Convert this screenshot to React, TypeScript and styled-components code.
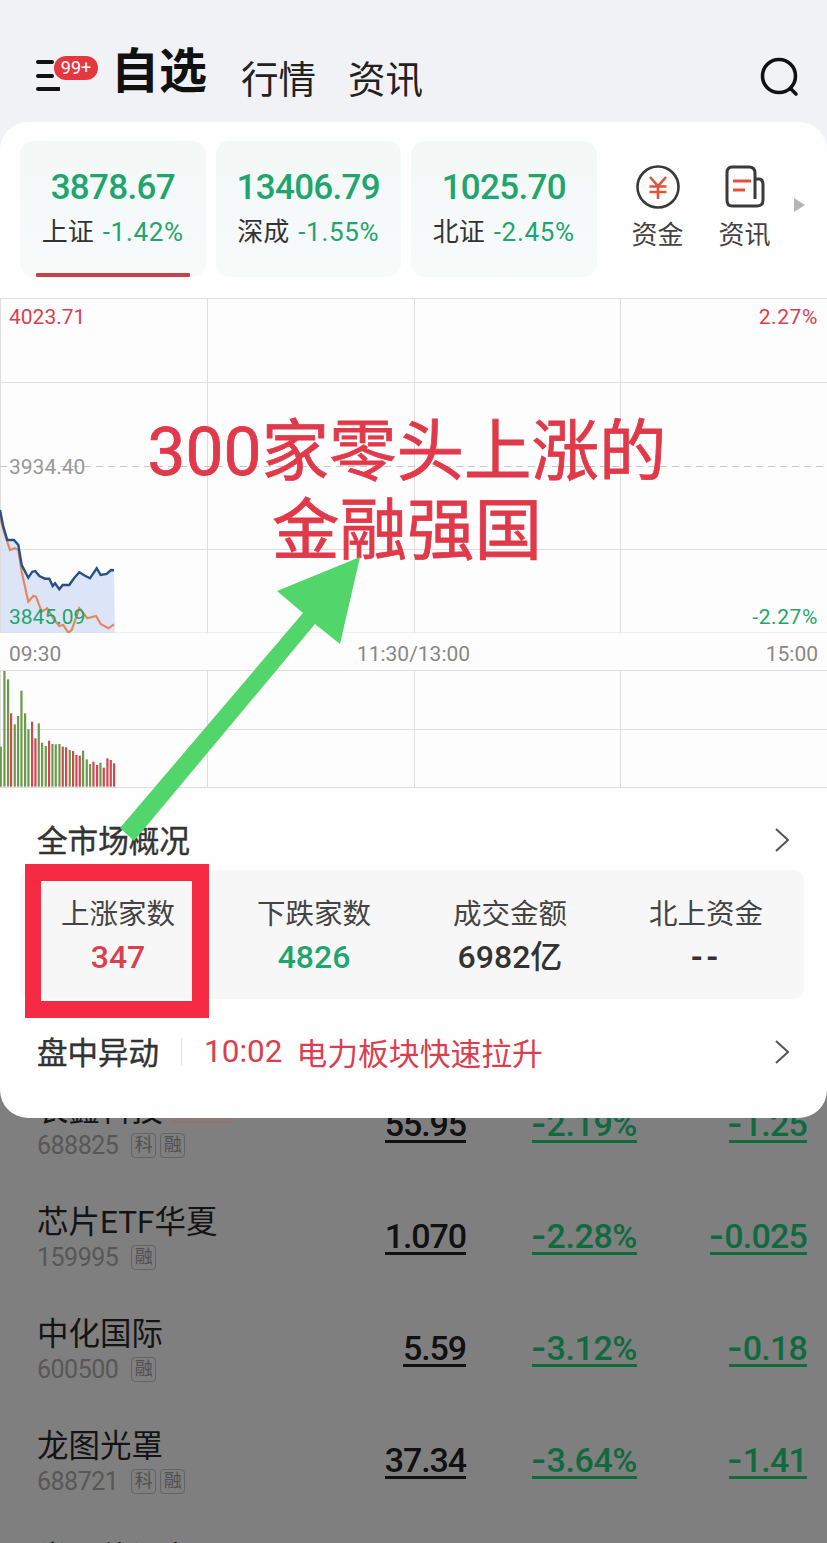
import { FC } from 'react';
import styled, { createGlobalStyle } from 'styled-components';

const GREEN = '#1fa56e';
const RED = '#d9404f';

const GlobalStyle = createGlobalStyle`
	html, body {
		margin: 0;
		padding: 0;
		background: #7f7f7f;
	}

	body {
		font-family: Roboto, "Noto Sans CJK SC", sans-serif;
	}
`;

const Page = styled.div`
	position: relative;
	width: 827px;
	height: 1543px;
	overflow: hidden;
	background: linear-gradient(180deg, #f0f2f6 0 200px, #7f7f7f 200px);
`;

const Header = styled.header`
	box-sizing: border-box;
	height: 122px;
	padding: 43px 27px 0 36px;
	display: flex;
	align-items: flex-start;
	color: #111;
`;

const MenuButton = styled.div`
	position: relative;
	width: 24px;
	height: 34px;
	margin: 17px 51px 0 0;
`;

const MenuBadge = styled.span`
	position: absolute;
	left: 18px;
	top: -4px;
	width: 44px;
	height: 24px;
	border-radius: 12px;
	background: #e5373f;
	color: #fff;
	font-size: 18px;
	line-height: 24px;
	text-align: center;
`;

const Title = styled.h1`
	margin: 0;
	font-size: 48px;
	line-height: 58px;
	font-weight: 700;
`;

const HeaderTab = styled.span`
	margin: 16px 0 0 34px;
	font-size: 37.5px;
	line-height: 42px;
	color: #222;

	& + & {
		margin-left: 32px;
	}
`;

const SearchButton = styled.svg`
	margin: 14px 0 0 auto;
`;

const Sheet = styled.main`
	position: relative;
	z-index: 1;
	height: 996px;
	box-sizing: border-box;
	padding-top: 19px;
	border-radius: 28px;
	background: #fefefe;
`;

const IndexBar = styled.div`
	display: flex;
	align-items: flex-start;
	gap: 10px;
	padding-left: 20px;
	height: 136px;
`;

const IndexCard = styled.div<{ $active?: boolean }>`
	position: relative;
	box-sizing: border-box;
	width: 185.5px;
	height: 136px;
	padding-top: 27px;
	border-radius: 14px;
	background: linear-gradient(180deg, #f3f8f7, #f8fafa);
	text-align: center;

	&::after {
		content: '';
		display: ${p => (p.$active ? 'block' : 'none')};
		position: absolute;
		left: 16px;
		right: 16px;
		bottom: 0;
		height: 4px;
		border-radius: 1px;
		background: #c8404a;
	}
`;

const IndexValue = styled.div`
	color: ${GREEN};
	font-size: 35px;
	font-weight: 500;
	line-height: 40px;
	letter-spacing: -0.7px;
`;

const IndexSub = styled.div`
	margin-top: 9px;
	display: flex;
	justify-content: center;
	gap: 9px;
	font-size: 26px;
	line-height: 30px;
	color: #333;
`;

const IndexChange = styled.span`
	color: ${GREEN};
	letter-spacing: 0.7px;
`;

const QuickItem = styled.div`
	width: 52px;
	margin-left: 25px;
	padding-top: 24px;
	text-align: center;
	font-size: 26px;
	line-height: 30px;
	color: #444;

	svg {
		display: block;
		margin: 0 auto 11px;
	}
`;

const MoreArrow = styled.span`
	width: 0;
	height: 0;
	margin: 57px 0 0 13px;
	border-left: 11px solid #b5b5b5;
	border-top: 7px solid transparent;
	border-bottom: 7px solid transparent;
`;

const ChartArea = styled.section`
	margin-top: 21px;
	background: #fdfdfd;
`;

const PricePanel = styled.div`
	position: relative;
	height: 335px;

	svg {
		display: block;
	}
`;

const PriceLabel = styled.span<{ $top: number; $right?: boolean; $color: string }>`
	position: absolute;
	top: ${p => p.$top}px;
	${p => (p.$right ? 'right: 9px; letter-spacing: 0.6px;' : 'left: 9px;')}
	color: ${p => p.$color};
	font-size: 21px;
	line-height: 24px;
`;

const TimeAxis = styled.div`
	box-sizing: border-box;
	height: 37px;
	padding: 4px 9px 0;
	display: flex;
	align-items: center;
	justify-content: space-between;
	color: #888;
	font-size: 21px;
`;

const VolumePanel = styled.svg`
	display: block;
`;

const SectionHead = styled.div`
	box-sizing: border-box;
	height: 62px;
	margin-top: 20px;
	padding: 0 38px 0 37px;
	display: flex;
	align-items: center;
	justify-content: space-between;
	font-size: 30.6px;
	color: #333;
	-webkit-text-stroke: 0.4px #333;

	svg {
		margin-top: 2px;
	}
`;

const StatsPanel = styled.div`
	margin: 0 23px 0 20px;
	height: 129px;
	display: grid;
	grid-template-columns: repeat(4, 1fr);
	border-radius: 10px;
	background: #f7f7f7;
`;

const StatCell = styled.div`
	padding-top: 27px;
	text-align: center;
	font-size: 28.5px;
	line-height: 36px;
	color: #444;
`;

const StatValue = styled.div<{ $color: string }>`
	margin-top: 5px;
	color: ${p => p.$color};
	font-size: 32px;
	font-weight: 500;
	line-height: 38px;
`;

const EmptyValue = styled(StatValue)`
	font-weight: 700;
	letter-spacing: 3px;
`;

const AlertRow = styled.div`
	box-sizing: border-box;
	height: 104px;
	padding: 0 38px 0 37px;
	display: flex;
	align-items: center;
	font-size: 30.5px;
	color: #333;

	svg {
		margin-top: 2px;
	}
`;

const AlertLabel = styled.span`
	-webkit-text-stroke: 0.4px #333;
`;

const AlertDivider = styled.span`
	width: 1px;
	height: 27px;
	margin: 0 22px;
	background: #e2e2e2;
`;

const AlertTime = styled.span`
	color: ${RED};
	font-size: 31.5px;
	margin-right: 14px;
`;

const AlertText = styled.span`
	color: ${RED};
	flex: 1;
	font-size: 30.8px;
`;

const WatchList = styled.section`
	margin-top: -48px;
`;

const WatchRow = styled.div`
	box-sizing: border-box;
	height: 112px;
	padding: 22px 20px 0 37px;
	display: grid;
	grid-template-columns: 1fr 116px 171px 170px;
	align-items: start;
`;

const StockName = styled.div`
	display: flex;
	align-items: center;
	gap: 10px;
	font-size: 31.5px;
	line-height: 38px;
	color: #141414;
`;

const HotTag = styled.span`
	width: 62px;
	height: 24px;
	margin-left: -1px;
	box-sizing: border-box;
	border: 1px solid #a06a70;
	border-radius: 4px;
	background: #8a7a7c;
`;

const StockCode = styled.div`
	margin-top: -3px;
	display: flex;
	align-items: center;
	gap: 4px;
	height: 36px;
	font-size: 25px;
	letter-spacing: -0.5px;
	color: #575757;
`;

const MarketTag = styled.span<{ $lead?: boolean }>`
	box-sizing: border-box;
	width: 25px;
	height: 25px;
	margin-left: ${p => (p.$lead ? '9px' : '0')};
	border: 1px solid #646464;
	border-radius: 4px;
	font-size: 18px;
	line-height: 22px;
	letter-spacing: 0;
	text-align: center;
	color: #505050;
`;

const NumCell = styled.div`
	margin-top: 16px;
	text-align: right;
`;

const Num = styled.span<{ $color: string; $track?: number }>`
	display: inline-block;
	color: ${p => p.$color};
	font-size: 34px;
	font-weight: 500;
	line-height: 32px;
	letter-spacing: ${p => p.$track ?? -1.1}px;
	border-bottom: 3px solid ${p => p.$color};
`;

// the list font has a longer minus than Roboto
const Minus = styled.span`
	font-size: 46px;
	font-weight: 400;
	line-height: 0;
	letter-spacing: 1.5px;
	vertical-align: -3px;
`;

const AnnotationText = styled.div`
	position: absolute;
	z-index: 2;
	left: 0;
	top: 412px;
	width: 814px;
	text-align: center;
	color: #e0394a;
	font-size: 67.5px;
	line-height: 79px;
	-webkit-text-stroke: 0.8px #e0394a;
`;

const AnnotationArrow = styled.svg`
	position: absolute;
	z-index: 2;
	left: 0;
	top: 0;
	pointer-events: none;
`;

const AnnotationBox = styled.div`
	position: absolute;
	z-index: 2;
	left: 25px;
	top: 864px;
	width: 184px;
	height: 154px;
	box-sizing: border-box;
	border: solid #f62a45;
	border-width: 17px 17px 17px 16px;
`;

// zoomed-in trace of the intraday lines, x = px / 3, y = 192 + py / 3
const BLUE_LINE = '0,60 10,110 22,150 42,150 55,165 65,225 85,263 97,245 106,243 118,258 135,266 148,266 158,288 165,280 178,298 188,285 208,285 222,265 238,247 255,257 270,265 290,235 302,255 320,252 333,240 342,241';
const ORANGE_LINE = '0,80 12,125 30,180 45,175 55,180 65,245 85,335 100,318 108,320 125,365 142,355 160,385 178,408 190,405 205,428 215,420 238,355 262,385 288,378 302,402 325,415 342,403';

const toChart = (line: string) =>
	line
		.split(' ')
		.map(pair => {
			const [x, y] = pair.split(',').map(Number);
			return `${(x / 3).toFixed(1)},${(192 + y / 3).toFixed(1)}`;
		})
		.join(' ');

const VOLUME: [number, number, 'g' | 'r'][] = [
	[2, 770, 'g'], [13, 543, 'g'], [24, 568, 'g'], [33, 670, 'r'], [44, 703, 'g'], [54, 678, 'g'],
	[64, 602, 'g'], [75, 670, 'g'], [85, 718, 'g'], [96, 695, 'r'], [106, 745, 'r'], [116, 700, 'g'],
	[126, 758, 'g'], [137, 768, 'g'], [147, 752, 'r'], [157, 762, 'g'], [167, 763, 'g'], [178, 762, 'g'],
	[188, 770, 'r'], [198, 772, 'r'], [209, 780, 'g'], [219, 783, 'r'], [229, 795, 'r'], [239, 797, 'r'],
	[249, 782, 'g'], [260, 808, 'g'], [270, 822, 'g'], [280, 815, 'r'], [291, 825, 'r'], [301, 818, 'g'],
	[311, 833, 'r'], [322, 805, 'r'], [332, 810, 'r'], [342, 820, 'r'],
];

const INDICES = [
	{ value: '3878.67', name: '上证', change: '-1.42%', active: true },
	{ value: '13406.79', name: '深成', change: '-1.55%' },
	{ value: '1025.70', name: '北证', change: '-2.45%' },
];

const STOCKS = [
	{ name: '长鑫科技', code: '688825', tags: ['科', '融'], price: '55.95', pct: '2.19%', diff: '1.25', hot: true },
	{ name: '芯片ETF华夏', code: '159995', tags: ['融'], price: '1.070', pct: '2.28%', diff: '0.025' },
	{ name: '中化国际', code: '600500', tags: ['融'], price: '5.59', pct: '3.12%', diff: '0.18' },
	{ name: '龙图光罩', code: '688721', tags: ['科', '融'], price: '37.34', pct: '3.64%', diff: '1.41' },
	{ name: '半导体设备ETF', code: '159516', tags: ['融'], price: '1.352', pct: '2.31%', diff: '0.032' },
];

const GRID = '#dedede';
const LIST_GREEN = '#0f6a40';

const Chevron: FC = () => (
	<svg width="14" height="24" viewBox="0 0 14 24" fill="none" stroke="#555" strokeWidth="2">
		<path d="M1 1 L13 12 L1 23" />
	</svg>
);

const VerticalGrid: FC<{ height: number }> = ({ height }) => (
	<>
		{[0.5, 207.5, 414.5, 620.5].map(x => (
			<line key={x} x1={x} x2={x} y1={0} y2={height} stroke={GRID} />
		))}
	</>
);

const App: FC = () => {
	const blue = toChart(BLUE_LINE);
	return (
		<Page>
			<GlobalStyle />
			<Header>
				<MenuButton>
					<svg width="24" height="34" viewBox="0 0 24 34" fill="none" stroke="#111" strokeWidth="4" strokeLinecap="round">
						<path d="M2 2 H16 M2 16 H16 M2 29 H23" />
					</svg>
					<MenuBadge>99+</MenuBadge>
				</MenuButton>
				<Title>自选</Title>
				<HeaderTab>行情</HeaderTab>
				<HeaderTab>资讯</HeaderTab>
				<SearchButton width="40" height="40" viewBox="0 0 40 40" fill="none" stroke="#111" strokeWidth="3.6" strokeLinecap="round">
					<circle cx="19" cy="19" r="16.5" />
					<path d="M31 32 L36 37" />
				</SearchButton>
			</Header>
			<Sheet>
				<IndexBar>
					{INDICES.map(item => (
						<IndexCard key={item.name} $active={item.active}>
							<IndexValue>{item.value}</IndexValue>
							<IndexSub>
								<span>{item.name}</span>
								<IndexChange>{item.change}</IndexChange>
							</IndexSub>
						</IndexCard>
					))}
					<QuickItem>
						<svg width="44" height="44" viewBox="0 0 44 44" fill="none">
							<circle cx="22" cy="22" r="20.5" stroke="#3a3a3a" strokeWidth="2.6" />
							<path d="M14 12 L22 21 L30 12 M13.5 21.5 H30.5 M13.5 27 H30.5 M22 21 V34" stroke="#e0533a" strokeWidth="2.6" />
						</svg>
						资金
					</QuickItem>
					<QuickItem>
						<svg width="40" height="44" viewBox="0 0 40 44" fill="none">
							<path d="M7 2 H24 Q30 2 30 8 V14 H34 Q38 14 38 20 V35 Q38 41 32 41 H7 Q2 41 2 35 V8 Q2 2 7 2 Z M30 14 V34" stroke="#3a3a3a" strokeWidth="3" />
							<path d="M8 16 H26 M8 25 H20" stroke="#e0533a" strokeWidth="2.8" />
						</svg>
						资讯
					</QuickItem>
					<MoreArrow />
				</IndexBar>
				<ChartArea>
					<PricePanel>
						<svg width="827" height="335" viewBox="0 0 827 335" fill="none">
							<polygon points={`0,212 ${blue} 115,335 0,335`} fill="#dce4f8" />
							<VerticalGrid height={335} />
							<path d="M0 0.5 H827 M0 84.5 H827 M0 251.5 H827 M0 335 H827" stroke={GRID} />
							<path d="M0 168.5 H827" stroke="#c8c8c8" strokeDasharray="7 5" />
							<polyline points={toChart(ORANGE_LINE)} stroke="#e08a5a" strokeWidth="2.2" />
							<polyline points={blue} stroke="#27508a" strokeWidth="2.4" />
						</svg>
						<PriceLabel $top={7} $color={RED}>4023.71</PriceLabel>
						<PriceLabel $top={7} $right $color={RED}>2.27%</PriceLabel>
						<PriceLabel $top={157} $color="#999">3934.40</PriceLabel>
						<PriceLabel $top={307} $color={GREEN}>3845.09</PriceLabel>
						<PriceLabel $top={307} $right $color={GREEN}>-2.27%</PriceLabel>
					</PricePanel>
					<TimeAxis>
						<span>09:30</span>
						<span>11:30/13:00</span>
						<span>15:00</span>
					</TimeAxis>
					<VolumePanel width="827" height="118" viewBox="0 0 827 118" fill="none">
						<VerticalGrid height={118} />
						<path d="M0 0.5 H827 M0 59.5 H827 M0 117.5 H827" stroke={GRID} />
						{VOLUME.map(([x, top, tone]) => (
							<rect
								key={x}
								x={x / 3 - 1}
								y={top / 3 - 180}
								width="2.2"
								height={890 / 3 - top / 3}
								fill={tone === 'g' ? '#6b9b4a' : '#cf4a50'}
							/>
						))}
					</VolumePanel>
				</ChartArea>
				<SectionHead>
					全市场概况
					<Chevron />
				</SectionHead>
				<StatsPanel>
					<StatCell>
						上涨家数
						<StatValue $color={RED}>347</StatValue>
					</StatCell>
					<StatCell>
						下跌家数
						<StatValue $color={GREEN}>4826</StatValue>
					</StatCell>
					<StatCell>
						成交金额
						<StatValue $color="#333">6982亿</StatValue>
					</StatCell>
					<StatCell>
						北上资金
						<EmptyValue $color="#333">--</EmptyValue>
					</StatCell>
				</StatsPanel>
				<AlertRow>
					<AlertLabel>盘中异动</AlertLabel>
					<AlertDivider />
					<AlertTime>10:02</AlertTime>
					<AlertText>电力板块快速拉升</AlertText>
					<Chevron />
				</AlertRow>
			</Sheet>
			<WatchList>
				{STOCKS.map(stock => (
					<WatchRow key={stock.code}>
						<div>
							<StockName>
								{stock.name}
								{stock.hot && <HotTag />}
							</StockName>
							<StockCode>
								{stock.code}
								{stock.tags.map((tag, i) => (
									<MarketTag key={tag} $lead={i === 0}>{tag}</MarketTag>
								))}
							</StockCode>
						</div>
						<NumCell><Num $color="#111">{stock.price}</Num></NumCell>
						<NumCell>
							<Num $color={LIST_GREEN} $track={-0.4}><Minus>-</Minus>{stock.pct}</Num>
						</NumCell>
						<NumCell>
							<Num $color={LIST_GREEN} $track={-0.8}><Minus>-</Minus>{stock.diff}</Num>
						</NumCell>
					</WatchRow>
				))}
			</WatchList>
			<AnnotationText>
				300家零头上涨的
				<br />
				金融强国
			</AnnotationText>
			<AnnotationBox />
			<AnnotationArrow width="827" height="1543" viewBox="0 0 827 1543">
				<polygon points="360,557 277,591 303,613 120,828 134,841 315,624 340,644" fill="#52d56a" />
			</AnnotationArrow>
		</Page>
	);
};

export default App;
